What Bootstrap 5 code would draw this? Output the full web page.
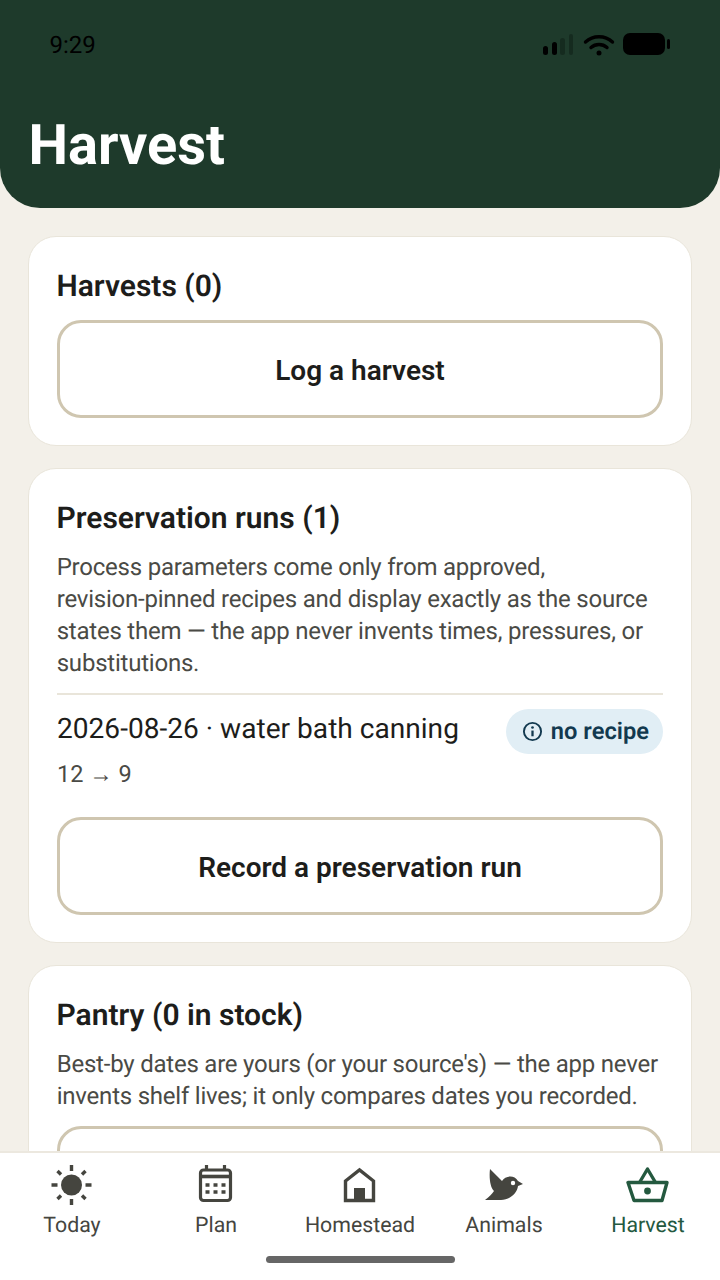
<!DOCTYPE html>
<html>
<head>
    <title>Harvest</title>
    <link rel="stylesheet" href="https://cdn.jsdelivr.net/npm/bootstrap@5.3.0/dist/css/bootstrap.min.css">
    <style>
        html, body { height: 1280px; }
        body { font-family: Roboto, "Liberation Sans", sans-serif; background: #f3f0e9; color: #1d1d1b; overflow: hidden; text-rendering: geometricPrecision; }
        .app-head { height: 208px; flex: none; background: #1e3a2b; border-radius: 0 0 40px 40px; padding: 28px 50px 0 28.5px; }
        .status-row { height: 34px; padding-left: 21px; }
        .status-time { font-size: 24px; line-height: 34px; color: #000; }
        .head-title { font-size: 56px; font-weight: 700; line-height: 64px; color: #fff; margin: 51px 0 0; }
        .app-main { min-height: 0; padding: 28px 28px 0; gap: 22px; overflow: hidden; }
        .sheet { flex: none; border: 1px solid #e9e5da; border-radius: 28px; padding: 28px 28px 27px; background: #fff; }
        .sheet-title { font-size: 30px; font-weight: 600; line-height: 44px; margin: 0 0 11px -.5px; color: #1d1d1b; }
        .sheet-note { font-size: 24px; letter-spacing: -.22px; line-height: 32px; color: #4a4a45; margin: -1px 0 14px -.3px; }
        .sheet-btn { display: block; width: 100%; height: 98px; padding-top: 4px; border: 3px solid #cfc6b0; border-radius: 24px; background: #fff; color: #1d1d1b; font-size: 28px; font-weight: 600; }
        .run-row { border-top: 2px solid #e9e5da; padding-top: 12px; margin-bottom: 27px; }
        .run-name { font-size: 28.1px; line-height: 44px; }
        .run-sub { font-size: 23.5px; line-height: 32px; color: #4a4a45; margin-top: 7px; }
        .tag-recipe { height: 45px; padding: 0 14px 0 16px; background: #e1eef5; color: #12394f; font-size: 23.7px; font-weight: 600; margin-top: 2px; gap: 8px; }
        .tab-bar { height: 129px; flex: none; background: #fff; border-top: 2px solid #ece8df; padding-top: 10px; }
        .tab-item { flex: 1 1 0; color: #45453f; font-size: 21.3px; font-weight: 450; line-height: 30px; }
        .tab-item.is-on { color: #24593f; }
        .tab-item svg { width: 44px; height: 44px; margin-bottom: 4px; }
        .home-bar { position: absolute; left: 266px; bottom: 17px; width: 189px; height: 7px; border-radius: 4px; background: #666; }
    </style>
</head>
<body class="d-flex flex-column position-relative">
    <header class="app-head">
        <div class="status-row d-flex justify-content-between align-items-center">
            <span class="status-time">9:29</span>
            <svg width="128" height="24" viewBox="0 0 128 24">
                <rect x="1" y="13" width="5" height="9" rx="2.5"/>
                <rect x="10" y="9" width="5" height="13" rx="2.5"/>
                <rect x="18" y="5" width="5" height="17" rx="2.5" opacity=".55" fill="#0e1f16"/>
                <rect x="27" y="1" width="4" height="21" rx="2" opacity=".55" fill="#0e1f16"/>
                <path d="M43.500 9 C51 2 63 2 70.500 9 M49 14.500 C53.500 10.500 60.500 10.500 65 14.500" fill="none" stroke="#000" stroke-width="3.400" stroke-linecap="round"/>
                <circle cx="57" cy="20" r="2.500"/>
                <rect x="81" y="0" width="42" height="22" rx="7"/>
                <rect x="125" y="6" width="3" height="10" rx="1.5"/>
            </svg>
        </div>
        <h1 class="head-title">Harvest</h1>
    </header>

    <main class="app-main flex-grow-1 d-flex flex-column">
        <section class="sheet">
            <h2 class="sheet-title">Harvests (0)</h2>
            <button class="sheet-btn" type="button">Log a harvest</button>
        </section>

        <section class="sheet">
            <h2 class="sheet-title">Preservation runs (1)</h2>
            <p class="sheet-note">Process parameters come only from approved, revision&#8209;pinned recipes and display exactly as the source states them — the app never invents times, pressures, or substitutions.</p>
            <div class="run-row d-flex justify-content-between align-items-start">
                <div>
                    <div class="run-name">2026-08-26 · water bath canning</div>
                    <div class="run-sub">12 → 9</div>
                </div>
                <span class="tag-recipe d-inline-flex align-items-center rounded-pill">
                    <svg width="21" height="21" viewBox="0 0 22 22" fill="none" stroke="currentColor" stroke-width="2">
                        <circle cx="11" cy="11" r="9"/>
                        <path d="M11 10v6" stroke-width="2.400"/>
                        <circle cx="11" cy="6.800" r="1.400" fill="currentColor" stroke="none"/>
                    </svg>
                    no recipe
                </span>
            </div>
            <button class="sheet-btn" type="button">Record a preservation run</button>
        </section>

        <section class="sheet">
            <h2 class="sheet-title">Pantry (0 in stock)</h2>
            <p class="sheet-note">Best-by dates are yours (or your source's) — the app never invents shelf lives; it only compares dates you recorded.</p>
            <button class="sheet-btn" type="button"></button>
        </section>
    </main>

    <nav class="tab-bar d-flex align-items-start">
        <div class="tab-item d-flex flex-column align-items-center">
            <svg viewBox="0 0 44 44" fill="#45453f" stroke="#45453f">
                <circle cx="21.500" cy="22" r="10.500" stroke="none"/>
                <path d="M21.500 2v6M21.500 36v6M1.500 22h6M35.500 22h6M7.500 8l3.500 3.500M32 32.500l3.500 3.500M7.500 36l3.500-3.500M32 11.500L35.500 8" stroke-width="3.400" fill="none"/>
            </svg>
            Today
        </div>
        <div class="tab-item d-flex flex-column align-items-center">
            <svg viewBox="0 0 44 44" fill="none" stroke="#45453f">
                <rect x="6.500" y="7" width="30" height="30.500" rx="3" stroke-width="3.200"/>
                <path d="M12.500 2v6M30.500 2v6" stroke-width="3.200"/>
                <path d="M6.500 13.500h30" stroke-width="3.600"/>
                <path d="M11.500 22h4M19.500 22h4M27.500 22h4M11.500 29h4M19.500 29h4M27.500 29h4" stroke-width="3.400"/>
            </svg>
            Plan
        </div>
        <div class="tab-item d-flex flex-column align-items-center">
            <svg viewBox="0 0 44 44" fill="none" stroke="#45453f">
                <path d="M7.500 37.500V18L21.500 7l14 11v19.500z" stroke-width="3.400"/>
                <rect x="16" y="25" width="11" height="12" fill="#45453f" stroke="none"/>
            </svg>
            Homestead
        </div>
        <div class="tab-item d-flex flex-column align-items-center">
            <svg viewBox="0 0 44 44" fill="#45453f">
                <path d="M8 6 L20 18 C23 13 32 11 36 18 L41 21 L36 23 C35 31 27 37 19 37 L3 37 C7 34 10 31 12 28 C8 24 7 14 8 6z"/>
                <circle cx="31" cy="20" r="2.200" fill="#fff"/>
            </svg>
            Animals
        </div>
        <div class="tab-item is-on d-flex flex-column align-items-center">
            <svg viewBox="0 0 44 44" fill="none" stroke="#24593f" stroke-width="3.400" stroke-linejoin="round">
                <path d="M2 19.500h39L36 37.500H8z"/>
                <path d="M13.500 19.500L21.500 6l8 13.500"/>
                <circle cx="21.500" cy="28" r="3.400" fill="#24593f" stroke="none"/>
            </svg>
            Harvest
        </div>
    </nav>
    <div class="home-bar"></div>
    <script src="https://cdn.jsdelivr.net/npm/bootstrap@5.3.0/dist/js/bootstrap.bundle.min.js"></script>
</body>
</html>
